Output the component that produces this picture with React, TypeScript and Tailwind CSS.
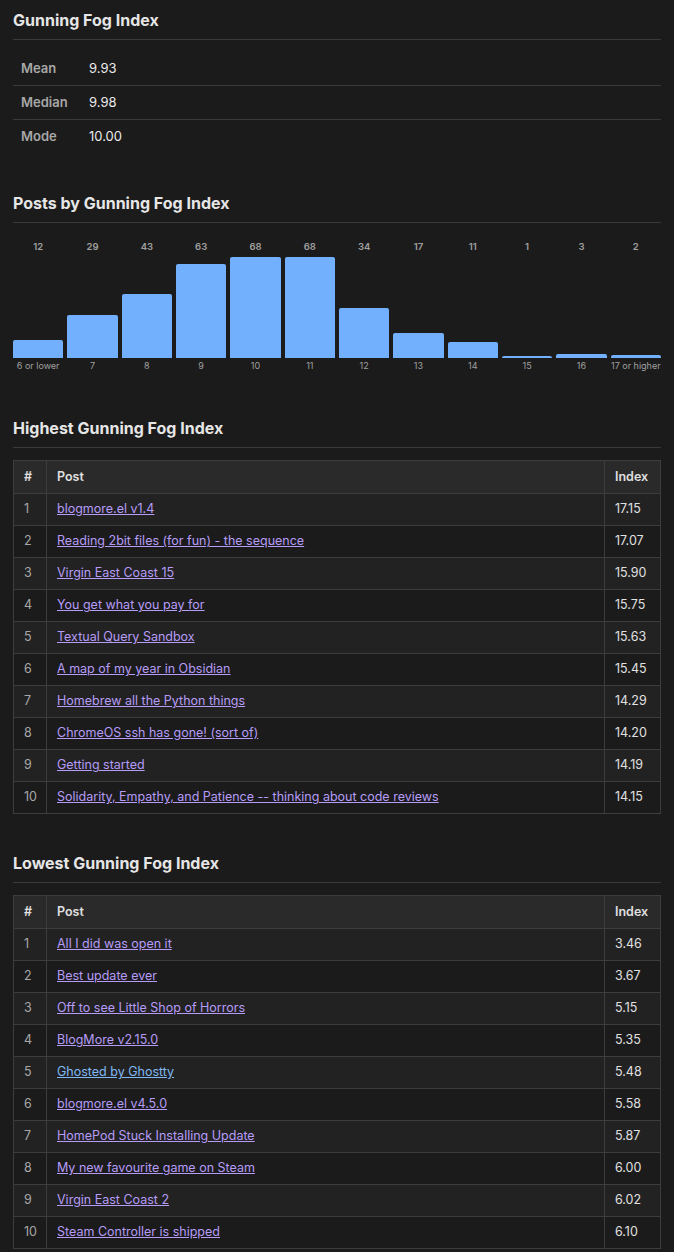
const stats = [["Mean","9.93"],["Median","9.98"],["Mode","10.00"]];
const bars: [string, number][] = [["6 or lower",12],["7",29],["8",43],["9",63],["10",68],["11",68],["12",34],["13",17],["14",11],["15",1],["16",3],["17 or higher",2]];
const high: [string,string][] = [["blogmore.el v1.4","17.15"],["Reading 2bit files (for fun) - the sequence","17.07"],["Virgin East Coast 15","15.90"],["You get what you pay for","15.75"],["Textual Query Sandbox","15.63"],["A map of my year in Obsidian","15.45"],["Homebrew all the Python things","14.29"],["ChromeOS ssh has gone! (sort of)","14.20"],["Getting started","14.19"],["Solidarity, Empathy, and Patience -- thinking about code reviews","14.15"]];
const low: [string,string][] = [["All I did was open it","3.46"],["Best update ever","3.67"],["Off to see Little Shop of Horrors","5.15"],["BlogMore v2.15.0","5.35"],["Ghosted by Ghostty","5.48"],["blogmore.el v4.5.0","5.58"],["HomePod Stuck Installing Update","5.87"],["My new favourite game on Steam","6.00"],["Virgin East Coast 2","6.02"],["Steam Controller is shipped","6.10"]];

function Title({children}:{children:string}){
  return <h2 className="text-[16px] font-bold text-[#e6e6e6] pb-[8px] border-b border-[#3a3a3a] leading-[22px]">{children}</h2>;
}

function Table({rows}:{rows:[string,string][]}){
  return (
    <table className="w-full border-collapse text-[12.5px] mt-[12px]">
      <thead>
        <tr className="bg-[#2a2a2a] h-[33px]">
          <th className="border border-[#3d3d3d] w-[33px] text-left pl-[10px] font-semibold text-[#e0e0e0]">#</th>
          <th className="border border-[#3d3d3d] text-left pl-[10px] font-semibold text-[#e0e0e0]">Post</th>
          <th className="border border-[#3d3d3d] w-[56px] text-left pl-[10px] font-semibold text-[#e0e0e0]">Index</th>
        </tr>
      </thead>
      <tbody>
        {rows.map(([t,v],i)=>(
          <tr key={i} className={`h-[32px] ${i%2===0?"bg-[#222222]":"bg-[#1b1b1b]"}`}>
            <td className="border border-[#3d3d3d] pl-[10px] text-[#a8a8a8]">{i+1}</td>
            <td className="border border-[#3d3d3d] pl-[10px]"><a href="#" className={`underline ${t==="Ghosted by Ghostty"?"text-[#7fb8f2]":"text-[#b69cf7]"}`}>{t}</a></td>
            <td className="border border-[#3d3d3d] pl-[10px] text-[#e0e0e0]">{v}</td>
          </tr>
        ))}
      </tbody>
    </table>
  );
}

export default function App(){
  return (
    <div className="min-h-[1252px] bg-[#1b1b1b] text-[#e0e0e0] px-[13px] pt-[9px] pb-[12px] w-[674px]" style={{fontFamily:"Inter, 'Liberation Sans', sans-serif"}}>
      <Title>Gunning Fog Index</Title>
      <div className="mt-[12px] text-[13px]">
        {stats.map(([k,v],i)=>(
          <div key={k} className={`flex h-[34px] items-center ${i<2?"border-b border-[#3a3a3a]":""}`}>
            <span className="w-[76px] pl-[8px] font-semibold text-[#a8a8a8]">{k}</span>
            <span className="text-[#eaeaea]">{v}</span>
          </div>
        ))}
      </div>
      <div className="mt-[38px]"><Title>Posts by Gunning Fog Index</Title></div>
      <div className="flex gap-[4px] mt-[18px]">
        {bars.map(([l,v])=>(
          <div key={l} className="flex-1 flex flex-col items-center">
            <span className="text-[9.5px] font-semibold text-[#a0a0a0] leading-[12px]">{v}</span>
            <div className="h-[103px] w-full flex items-end mt-[2px]">
              <div className="w-full bg-[#72affc] rounded-t-[2px]" style={{height: `${Math.max(2, v/68*101)}px`}} />
            </div>
            <span className="text-[9px] text-[#a0a0a0] mt-[2px] leading-[12px] whitespace-nowrap">{l}</span>
          </div>
        ))}
      </div>
      <div className="mt-[45px]"><Title>Highest Gunning Fog Index</Title></div>
      <Table rows={high}/>
      <div className="mt-[38px]"><Title>Lowest Gunning Fog Index</Title></div>
      <Table rows={low}/>
    </div>
  );
}
